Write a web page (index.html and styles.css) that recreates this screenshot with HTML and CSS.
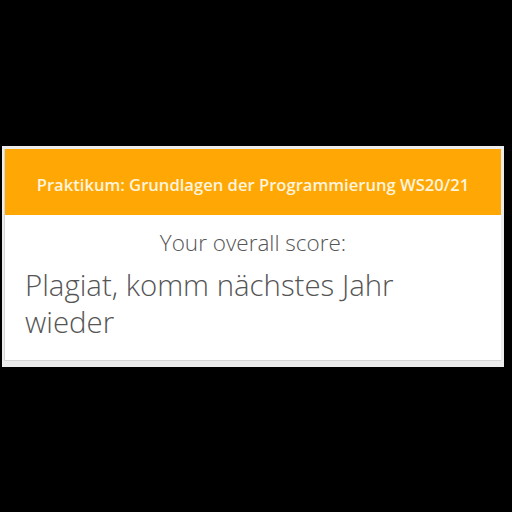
FILE: index.html
```html
<!DOCTYPE html>
<html>
<head>
<meta charset="utf-8">
<link rel="stylesheet" href="styles.css">
</head>
<body>
<div class="frame">
  <div class="card">
    <div class="card-header">Praktikum: Grundlagen der Programmierung WS20/21</div>
    <div class="card-body">
      <div class="label">Your overall score:</div>
      <div class="score">Plagiat, komm nächstes Jahr wieder</div>
    </div>
  </div>
</div>
</body>
</html>
```

FILE: styles.css
```css
html, body {
  margin: 0;
  padding: 0;
  background: #000;
  width: 512px;
  height: 512px;
  overflow: hidden;
}
body {
  display: flex;
  flex-direction: column;
  padding-top: 146px;
  box-sizing: border-box;
}
.frame {
  margin-left: 2px;
  width: 502px;
  background: #ececec;
  padding: 3px 3px 6px 2px;
  box-sizing: border-box;
}
.card {
  background: #fff;
  border-bottom: 1px solid #d6d6d6;
  border-left: 1px solid #d6d6d6;
}
.card-header {
  background: #ffa705;
  color: #fff4dc;
  font-family: "Open Sans", sans-serif;
  font-weight: 600;
  font-size: 16.6px;
  height: 66px;
  display: flex;
  align-items: center;
  justify-content: center;
  padding-top: 4px;
  box-sizing: border-box;
}
.card-body {
  height: 145px;
  padding: 14px 20px 0 20px;
  box-sizing: border-box;
  font-family: "Open Sans", sans-serif;
  font-weight: 300;
  color: #555;
}
.label {
  text-align: center;
  font-size: 22.5px;
  line-height: 28px;
}
.score {
  font-size: 29.4px;
  line-height: 37px;
  margin-top: 10px;
  width: 380px;
}
```
